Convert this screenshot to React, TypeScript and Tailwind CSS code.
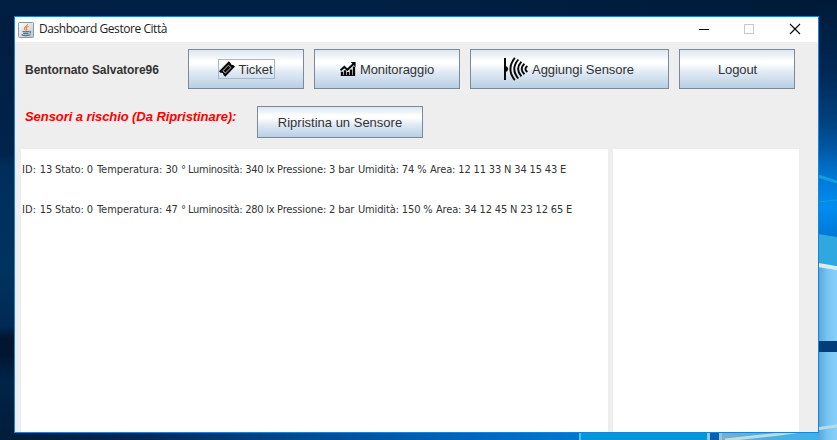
import type { ReactNode } from "react";

function Wallpaper() {
  return (
    <svg className="absolute inset-0 h-full w-full" viewBox="0 0 837 440" preserveAspectRatio="none">
      <defs>
        <linearGradient id="top" x1="0" x2="1" y1="0" y2="0">
          <stop offset="0" stopColor="#001f43" />
          <stop offset="0.4" stopColor="#002045" />
          <stop offset="1" stopColor="#001a38" />
        </linearGradient>
        <linearGradient id="left" x1="0" x2="0" y1="0" y2="1">
          <stop offset="0" stopColor="#001d3f" />
          <stop offset="0.32" stopColor="#00244d" />
          <stop offset="0.36" stopColor="#002e5c" />
          <stop offset="0.6" stopColor="#00335f" />
          <stop offset="0.73" stopColor="#002a55" />
          <stop offset="0.76" stopColor="#00152f" />
          <stop offset="0.8" stopColor="#001733" />
          <stop offset="0.86" stopColor="#002449" />
          <stop offset="1" stopColor="#001c3a" />
        </linearGradient>
        <linearGradient id="bottom" x1="0" x2="1" y1="0" y2="0">
          <stop offset="0" stopColor="#001d3b" />
          <stop offset="0.25" stopColor="#002a57" />
          <stop offset="0.5" stopColor="#00488c" />
          <stop offset="0.8" stopColor="#0065bc" />
          <stop offset="1" stopColor="#0078d0" />
        </linearGradient>
        <linearGradient id="right" x1="0" x2="0" y1="0" y2="1">
          <stop offset="0" stopColor="#001a38" />
          <stop offset="0.3" stopColor="#002856" />
          <stop offset="0.5" stopColor="#00417d" />
          <stop offset="0.62" stopColor="#0058a5" />
          <stop offset="0.74" stopColor="#0079d6" />
          <stop offset="0.86" stopColor="#008df0" />
          <stop offset="1" stopColor="#0076d3" />
        </linearGradient>
        <linearGradient id="pane" x1="0" x2="1" y1="0" y2="0">
          <stop offset="0" stopColor="#55a5d6" />
          <stop offset="0.5" stopColor="#77c5f3" />
          <stop offset="1" stopColor="#88d0fa" />
        </linearGradient>
        <linearGradient id="corner" x1="0" x2="1" y1="0" y2="0">
          <stop offset="0" stopColor="#7cadcb" />
          <stop offset="0.4" stopColor="#4eb0dc" />
          <stop offset="1" stopColor="#35b3ef" />
        </linearGradient>
      </defs>
      <rect width="837" height="440" fill="url(#top)" />
      <rect y="16" width="15" height="424" fill="url(#left)" />
      <rect y="432" width="580" height="8" fill="url(#bottom)" />
      <rect x="580" y="432" width="127" height="8" fill="#0097db" />
      <rect x="579" y="432" width="2" height="8" fill="#48c4df" />
      <rect x="707" y="432" width="3" height="8" fill="#8bc9e3" />
      <rect x="710" y="432" width="9" height="8" fill="#0860b5" />
      <rect x="719" y="432" width="3" height="8" fill="#9ac4dc" />
      <rect x="722" y="432" width="115" height="8" fill="url(#corner)" />
      <rect x="818" y="0" width="19" height="240" fill="url(#right)" />
      <path d="M818 176 837 182" stroke="#139fdf" strokeWidth="3" />
      <path d="M818 202 837 200" stroke="#119ddf" strokeWidth="1" />
      <path d="M818 234 837 237V266L818 264Z" fill="#2fa8e2" />
      <path d="M818 264 837 267V341H818ZM818 352H837V440H818Z" fill="url(#pane)" />
      <path d="M818 265 837 268" stroke="#d6edf2" strokeWidth="4" />
      <rect x="818" y="341" width="19" height="11" fill="#003e7b" />
      <path d="M725 440 780 434 837 426" fill="none" stroke="#b6dde8" strokeWidth="3" />
    </svg>
  );
}

function JavaIcon() {
  return (
    <svg className="h-4 w-4 shrink-0" viewBox="0 0 16 16" fill="none">
      <defs>
        <linearGradient id="javaTile" x1="0" x2="1" y1="0" y2="1">
          <stop stopColor="#fff" />
          <stop offset="1" stopColor="#bbc5ce" />
        </linearGradient>
      </defs>
      <rect x="0.5" y="0.5" width="15" height="15" rx="1" fill="url(#javaTile)" stroke="#8998a6" />
      <path d="M9.5 2C10 4 6 4.7 6.4 6.5Q6.5 7.3 7.5 8.5M10.5 4.5C7.5 5.3 7.8 6.2 8.6 7Q9 7.5 8.3 8.5" stroke="#ee8025" strokeWidth="1.1" />
      <path d="M4.5 9.3Q7 10.3 11 9.3M11.5 9.3Q13.7 9.2 11.7 11.3M5 11.2Q8 12.2 10.5 11.2M3.5 12.6Q7 14.4 12.5 12.7" stroke="#4c7899" strokeWidth="1.2" />
    </svg>
  );
}

function TicketIcon() {
  return (
    <svg className="h-4 w-4 shrink-0" viewBox="0 0 16 16">
      <path d="M0 10.2 9.8.3 11.6 2Q11.5 4.2 14.2 4L16 5.6 6.3 15.8 4.5 14Q4.6 11.6 1.8 11.9Z" fill="#080808" />
      <path d="M3.9 9.8 9.4 4.2 11.9 6.5 6.4 12.1Z" fill="none" stroke="#dfe8f0" strokeWidth="0.8" />
    </svg>
  );
}

function ChartIcon() {
  return (
    <svg className="h-4 w-4 shrink-0" viewBox="0 0 16 16" fill="none" stroke="#080808">
      <path d="M.5 9.3 4.3 5.9 7.3 8.8 14 2.5" strokeWidth="2" />
      <path d="M10.7 1H15.6V5.9Z" fill="#080808" stroke="none" />
      <path d="M2 14.8V10.8M5 14.8V9.2M8 14.8V11M11 14.8V8.5M14 14.8V5.5" strokeWidth="2.3" />
      <path d="M.8 14.4H15" strokeWidth="1" />
    </svg>
  );
}

function SensorIcon() {
  return (
    <svg className="h-6 w-6 shrink-0" viewBox="0 0 24 24" fill="none" stroke="#080808">
      <path d="M1 1V23" strokeWidth="2" />
      <path d="M1.7 8.8Q4.2 10 4.2 12T1.7 15.2Z" fill="#080808" stroke="none" />
      <path d="M10.8.8Q2 12 10.8 23.2M14.3 2.5Q6.3 12 14.3 21.5M17.4 4.6Q10.8 12 17.4 19.4M20.4 6.8Q15 12 20.4 17.2M23.4 9Q19.3 12 23.4 15" strokeWidth="1.9" />
    </svg>
  );
}

function MetalButton({ className, children }: { className: string; children: ReactNode }) {
  return (
    <button
      className={`flex shrink-0 items-center justify-center border border-[#7a8a99] bg-[linear-gradient(to_bottom,#dce7f1_0%,#ffffff_30%,#ffffff_35%,#dfe9f3_60%,#b8cfe5_100%)] text-[13px] text-[#333333] ${className}`}
    >
      {children}
    </button>
  );
}

function TitleBar() {
  return (
    <header className="flex h-[25px] items-center bg-white pl-[3px]">
      <JavaIcon />
      <h1 className="ml-[5px] pb-px font-['Open_Sans',sans-serif] text-[12px] leading-4 tracking-[-0.45px] text-[#222222]">
        Dashboard Gestore Città
      </h1>
      <svg className="ml-auto h-[25px] w-[129px]" viewBox="0 0 129 25" fill="none">
        <path d="M10 12.5H20" stroke="#000" />
        <rect x="55.5" y="7.5" width="9" height="9" stroke="#c8c8c8" />
        <path d="M101 7 111 17M111 7 101 17" stroke="#000" strokeWidth="1.1" />
      </svg>
    </header>
  );
}

const sensors = [
  {
    id: "13",
    readings: ["Stato: 0", "Temperatura: 30 °", "Luminosità: 340 lx", "Pressione: 3 bar"],
    humidity: "Umidità: 74 %",
    humidityWidth: "w-[72px]",
    area: "Area: 12 11 33 N 34 15 43 E",
  },
  {
    id: "15",
    readings: ["Stato: 0", "Temperatura: 47 °", "Luminosità: 280 lx", "Pressione: 2 bar"],
    humidity: "Umidità: 150 %",
    humidityWidth: "w-[78px]",
    area: "Area: 34 12 45 N 23 12 65 E",
  },
];
const readingWidths = ["w-[42px]", "w-[91px] tracking-[-0.06px]", "w-[89px] tracking-[-0.28px]", "w-[81px]"];

export default function App() {
  return (
    <div className="relative h-[440px] w-[837px] overflow-hidden pl-[14px] pt-4 font-['Liberation_Sans',Arial,sans-serif]">
      <Wallpaper />
      <main className="relative flex h-[417px] w-[805px] flex-col border border-[#1883d7] bg-[#eeeeee]">
        <TitleBar />
        <nav className="mt-[7px] flex h-10 items-center gap-[10px] pl-[10px]">
          <span className="w-[153px] whitespace-nowrap pt-0.5 text-[12px] font-bold tracking-[-0.04px] text-[#333333]">
            Bentornato Salvatore96
          </span>
          <MetalButton className="h-10 w-[116px]">
            <span className="flex h-5 w-[57px] items-center gap-1 border border-[#a3b8cc]">
              <TicketIcon />
              <span className="pt-0.5">Ticket</span>
            </span>
          </MetalButton>
          <MetalButton className="h-10 w-[146px] gap-1">
            <ChartIcon />
            <span className="pt-0.5 tracking-[-0.08px]">Monitoraggio</span>
          </MetalButton>
          <MetalButton className="h-10 w-[199px] gap-1 pr-[1px]">
            <SensorIcon />
            <span className="pt-0.5 tracking-[-0.04px]">Aggiungi Sensore</span>
          </MetalButton>
          <MetalButton className="h-10 w-[116px]">
            <span className="pl-px pt-0.5 tracking-[-0.1px]">Logout</span>
          </MetalButton>
        </nav>
        <div className="mt-[17px] flex h-8 items-start pl-[10px]">
          <h2 className="w-[232px] whitespace-nowrap text-[13px] font-bold italic leading-[22px] tracking-[-0.07px] text-[#ff0000]">
            Sensori a rischio (Da Ripristinare):
          </h2>
          <MetalButton className="h-8 w-[166px]">
            <span className="pt-0.5">Ripristina un Sensore</span>
          </MetalButton>
        </div>
        <div className="mt-[11px] flex flex-1 gap-[5px] pl-[6px]">
          <ul className="w-[587px] bg-white font-['DejaVu_Sans_Condensed','DejaVu_Sans',sans-serif] text-[11px] tracking-[-0.14px] text-[#333333]">
            {sensors.map((sensor) => (
              <li key={sensor.id} className="flex h-10 items-center whitespace-nowrap pt-0.5">
                <span className="w-[34px] pl-px tracking-[0.15px]">ID: {sensor.id} </span>
                {sensor.readings.map((reading, i) => (
                  <span key={reading} className={readingWidths[i]}>
                    {reading}{" "}
                  </span>
                ))}
                <span className={sensor.humidityWidth}>{sensor.humidity} </span>
                <span className="tracking-[-0.16px]">{sensor.area}</span>
              </li>
            ))}
          </ul>
          <aside className="w-[186px] bg-white" />
        </div>
      </main>
    </div>
  );
}
